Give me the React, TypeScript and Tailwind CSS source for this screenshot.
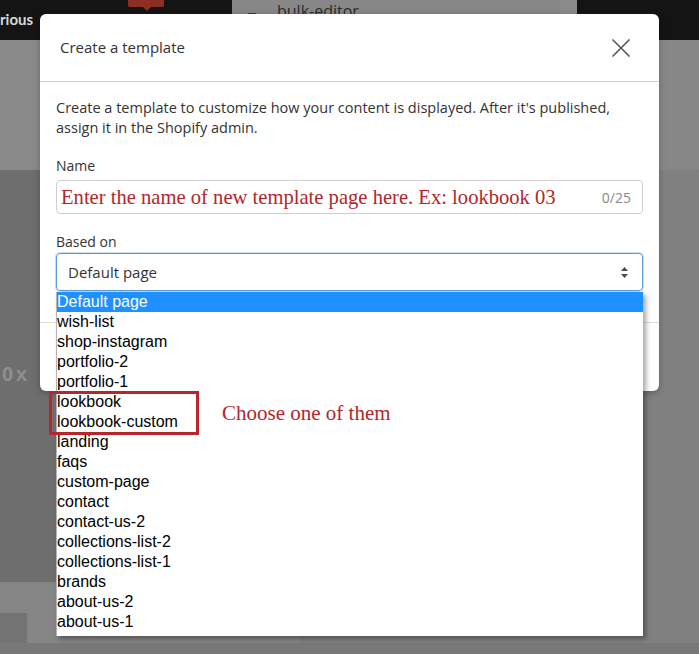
import React from 'react';

const templates = [
  'Default page',
  'wish-list',
  'shop-instagram',
  'portfolio-2',
  'portfolio-1',
  'lookbook',
  'lookbook-custom',
  'landing',
  'faqs',
  'custom-page',
  'contact',
  'contact-us-2',
  'collections-list-2',
  'collections-list-1',
  'brands',
  'about-us-2',
  'about-us-1',
];

function CloseIcon() {
  return (
    <svg width="20" height="20" viewBox="0 0 20 20" fill="none">
      <path d="M2 2L18 18M18 2L2 18" stroke="#5a5a5a" strokeWidth="1.7" strokeLinecap="round" />
    </svg>
  );
}

function SelectArrows() {
  return (
    <svg width="9" height="13" viewBox="0 0 9 13">
      <path d="M4.5 1L8 5H1Z" fill="#4a4a4a" />
      <path d="M4.5 12L1 8H8Z" fill="#4a4a4a" />
    </svg>
  );
}

// dimmed page behind the dialog
function Backdrop() {
  return (
    <div className="flex flex-col w-full h-full">
      <div className="flex h-[40px] shrink-0">
        <div className="w-[232px] bg-[#141414] relative">
          <span className="absolute left-0 top-[10px] text-[15px] font-bold text-[#d8d8d8] leading-[18px]" style={{ fontFamily: 'Lato, sans-serif' }}>
            rious
          </span>
          <div className="absolute left-[128px] top-0 w-[36px] h-[7px] bg-[#8c2e24] rounded-b-[2px]" />
          <div className="absolute left-[143px] top-[7px] w-0 h-0 border-l-[4px] border-r-[4px] border-t-[4px] border-l-transparent border-r-transparent border-t-[#8c2e24]" />
        </div>
        <div className="w-[328px] bg-[#878787] relative">
          <span className="absolute left-[16px] top-[13px] w-[8px] h-px bg-[#3a3a3a]" />
          <span className="absolute left-[45px] top-[1px] text-[16px] text-[#2a2a2a] leading-[20px]" style={{ fontFamily: '"Open Sans", sans-serif' }}>
            bulk-editor
          </span>
        </div>
        <div className="w-[17px] bg-[#8b8b8b]" />
        <div className="flex-1 bg-[#141414]" />
      </div>
      <div className="flex flex-1">
        <div className="w-[300px] flex flex-col">
          <div className="h-[130px] bg-[#898989]" />
          <div className="h-[412px] bg-[#6e6e6e] flex flex-col justify-center">
            <span className="ml-[2px] mt-[-4px] text-[20px] font-bold text-[#8f8f8f] tracking-[3px] leading-[24px]" style={{ fontFamily: '"Liberation Sans", sans-serif' }}>
              0x
            </span>
          </div>
          <div className="h-[61px] bg-[#858585] flex flex-col justify-end">
            <div className="w-[27px] h-[30px] bg-[#737373]" />
          </div>
        </div>
        <div className="flex-1 flex flex-col">
          <div className="h-[130px] bg-[#878787]" />
          <div className="flex-1 bg-[#808080]" />
        </div>
      </div>
      <div className="h-[11px] bg-[#787878] shrink-0" />
    </div>
  );
}

export default function App() {
  return (
    <div className="relative w-[699px] h-[654px] overflow-hidden bg-[#808080]">
      <Backdrop />

      {/* Dialog */}
      <div
        className="absolute left-[40px] top-[14px] w-[619px] h-[377px] bg-white rounded-[6px] flex flex-col shadow-[0_2px_6px_rgba(0,0,0,0.25)]"
        style={{ fontFamily: '"Open Sans", sans-serif' }}
      >
        <div className="h-[68px] shrink-0 px-5 flex items-center justify-between border-b border-[#d2d2d2]">
          <span className="text-[15px] text-[#333]">Create a template</span>
          <div className="mr-[8px] mt-[1px]">
            <CloseIcon />
          </div>
        </div>

        <div className="px-4 pt-4 pb-[31px] border-b border-[#dcdcdc]">
          <p className="text-[14.5px] leading-[20px] text-[#333] mb-[18px] whitespace-nowrap">
            Create a template to customize how your content is displayed. After it's published,
            <br />
            assign it in the Shopify admin.
          </p>

          <div className="text-[14px] leading-[20px] text-[#333] mb-1">Name</div>
          <div className="h-[34px] border border-[#cfcfcf] rounded-[4px] flex items-center justify-between pl-[4px] pr-[11px]">
            <span className="text-[20.6px] text-[#b3262c] leading-[24px]" style={{ fontFamily: '"Liberation Serif", serif' }}>
              Enter the name of new template page here. Ex: lookbook 03
            </span>
            <span className="text-[14px] text-[#8a8a8a]">0/25</span>
          </div>

          <div className="text-[14px] leading-[20px] text-[#333] mt-[18px]">Based on</div>
          <div className="mt-px h-[38px] border border-[#5e9bd3] rounded-[4px] shadow-[0_0_0_1px_rgba(94,155,211,0.35)] flex items-center justify-between pl-[11px] pr-[13px]">
            <span className="text-[15px] text-[#333]">Default page</span>
            <SelectArrows />
          </div>
        </div>
        <div className="flex-1" />
      </div>

      {/* Open native select list */}
      <div
        className="absolute left-[56px] top-[292px] w-[587px] pb-[4px] bg-white border-l border-[#b4b4b4] shadow-[3px_3px_5px_rgba(0,0,0,0.35)]"
        style={{ fontFamily: '"Liberation Sans", Arial, sans-serif' }}
      >
        {templates.map((name, i) => (
          <div
            key={name}
            className={`h-[20px] leading-[20px] text-[16px] ${i === 0 ? 'bg-[#1e90ff] text-white' : 'text-black'}`}
          >
            {name}
          </div>
        ))}
      </div>

      {/* Annotation */}
      <div className="absolute left-[49px] top-[391px] w-[150px] h-[44px] border-[3px] border-[#b8262c]" />
      <span
        className="absolute left-[222px] top-[400px] text-[21px] leading-[26px] text-[#b3262c]"
        style={{ fontFamily: '"Liberation Serif", serif' }}
      >
        Choose one of them
      </span>
    </div>
  );
}
